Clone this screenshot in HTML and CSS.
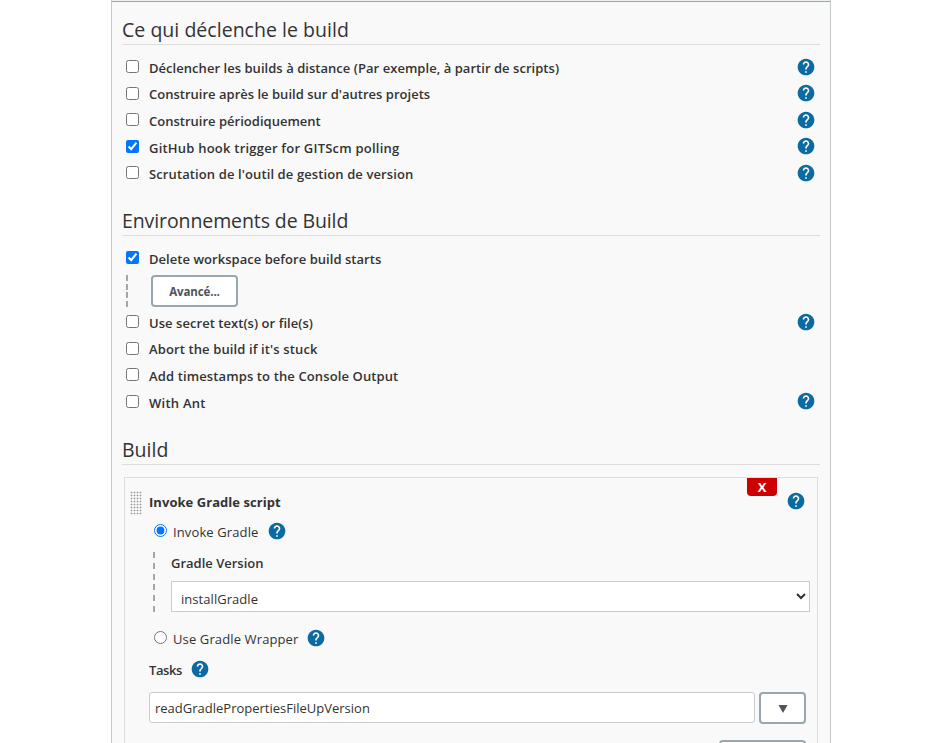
FILE: index.html
```html
<!DOCTYPE html>
<html lang="fr">
<head>
<meta charset="utf-8">
<title>Configuration</title>
<link rel="stylesheet" href="styles.css">
</head>
<body>
<svg width="0" height="0" class="defs"><symbol id="help" viewBox="0 0 24 24"><path fill="#0b6aa2" d="M12 2C6.48 2 2 6.48 2 12s4.48 10 10 10 10-4.480 10-10S17.520 2 12 2z"/><path fill="#fff" d="M11 17h2v2h-2zM15.070 11.250l-.9.920C13.450 12.900 13 13.500 13 15h-2v-.5c0-1.100.450-2.100 1.170-2.830l1.240-1.260c.370-.360.590-.860.590-1.410 0-1.100-.9-2-2-2s-2 .9-2 2H8c0-2.210 1.790-4 4-4s4 1.790 4 4c0 .880-.360 1.680-.930 2.250z"/></symbol></svg>
<main class="panel">
  <section>
    <h2 class="h-trigger"><span>Ce qui déclenche le build</span></h2>
    <div class="options">
      <div class="option"><label><input type="checkbox"><span class="t1">Déclencher les builds à distance (Par exemple, à partir de scripts)</span></label><svg class="help"><use href="#help"/></svg></div>
      <div class="option"><label><input type="checkbox"><span class="t2">Construire après le build sur d'autres projets</span></label><svg class="help"><use href="#help"/></svg></div>
      <div class="option"><label><input type="checkbox"><span class="t3">Construire périodiquement</span></label><svg class="help"><use href="#help"/></svg></div>
      <div class="option"><label><input type="checkbox" checked><span class="t4">GitHub hook trigger for GITScm polling</span></label><svg class="help"><use href="#help"/></svg></div>
      <div class="option"><label><input type="checkbox"><span class="t5">Scrutation de l'outil de gestion de version</span></label><svg class="help"><use href="#help"/></svg></div>
    </div>
  </section>
  <section>
    <h2 class="h-env"><span>Environnements de Build</span></h2>
    <div class="options">
      <div class="option"><label><input type="checkbox" checked><span class="t6">Delete workspace before build starts</span></label></div>
      <div class="nested"><i class="dash dash-short"></i><button class="advanced">Avancé...</button></div>
      <div class="option"><label><input type="checkbox"><span class="t7">Use secret text(s) or file(s)</span></label><svg class="help"><use href="#help"/></svg></div>
      <div class="option"><label><input type="checkbox"><span class="t8">Abort the build if it's stuck</span></label></div>
      <div class="option"><label><input type="checkbox"><span class="t9">Add timestamps to the Console Output</span></label></div>
      <div class="option"><label><input type="checkbox"><span class="t10">With Ant</span></label><svg class="help"><use href="#help"/></svg></div>
    </div>
  </section>
  <section>
    <h2 class="h-build"><span>Build</span></h2>
    <div class="step">
      <button class="delete">X</button>
      <div class="step-head"><i class="grip"></i><b>Invoke Gradle script</b><svg class="help"><use href="#help"/></svg></div>
      <div class="choice"><label><input type="radio" name="gradle" checked><span class="r1">Invoke Gradle</span></label><svg class="help"><use href="#help"/></svg></div>
      <div class="version">
        <i class="dash"></i>
        <div class="field"><span class="field-label">Gradle Version</span><select><option>installGradle</option></select></div>
      </div>
      <div class="choice wrapper"><label><input type="radio" name="gradle"><span class="r2">Use Gradle Wrapper</span></label><svg class="help"><use href="#help"/></svg></div>
      <div class="tasks-label"><span>Tasks</span><svg class="help"><use href="#help"/></svg></div>
      <div class="tasks"><input type="text" value="readGradlePropertiesFileUpVersion"><button class="expand"><svg width="10" height="8"><path d="M.5 0h9L5 8z"/></svg></button></div>
      <button class="more"></button>
    </div>
  </section>
</main>
</body>
</html>
```
FILE: styles.css
```css
* { box-sizing: border-box; }
body { margin: 0; background: #fff; color: #333; font-family: "Open Sans", "Noto Sans", sans-serif; font-size: 13px; height: 743px; overflow: hidden; }
.defs { position: absolute; }
input, button, select { margin: 0; font-family: inherit; color: inherit; }
button { padding: 0; }
.panel { width: 720px; height: 743px; margin-left: 111px; padding: 2px 10px 0; overflow: hidden; background: linear-gradient(#edf2f4 0 1px, #99a8ae 1px 2px, #f9f9f9 2px); border: 1px solid #c6c9cb; border-width: 0 1px; }
h2 { margin: 0; height: 43px; padding-top: 15px; border-bottom: 1px solid #dcdcdc; font-size: 19.5px; font-weight: 500; line-height: 25px; white-space: nowrap; }
.h-trigger { letter-spacing: .03px; }
.options { padding-top: 8.3px; }
.option { display: flex; align-items: center; justify-content: space-between; height: 26.6px; padding: 0 5px 0 4px; }
.option label { display: flex; align-items: center; height: 100%; }
.option label input { width: 13px; height: 13px; margin-right: 10px; }
.option span { font-weight: 600; line-height: 20px; padding-top: 2.4px; white-space: nowrap; }
.t1 { letter-spacing: .04px; }
.t2 { letter-spacing: .01px; }
.t3 { letter-spacing: .01px; }
.t4 { letter-spacing: .22px; }
.t5 { letter-spacing: .11px; }
.t6 { letter-spacing: .04px; }
.t7 { letter-spacing: .05px; }
.t8 { letter-spacing: .12px; }
.t9 { letter-spacing: .12px; }
.t10 { letter-spacing: .25px; }
.help { width: 20px; height: 20px; flex: none; }
.option .help { margin-right: -1px; }
.h-env { margin-top: 6.7px; letter-spacing: -.1px; }
.h-env + .options { padding-top: 8.7px; }
.nested { display: flex; height: 37px; padding: 3.4px 0 0 4px; }
.dash { width: 2px; flex: none; background: repeating-linear-gradient(#a6a6a6 0 6px, transparent 6px 10.8px); }
.dash-short { height: 32px; background: repeating-linear-gradient(#a6a6a6 0 6px, transparent 6px 8.700px); }
.advanced { width: 87px; height: 32px; margin-left: 23px; padding-top: 2px; border: 2px solid #98a6af; border-radius: 4px; background: #fff; font-size: 11.5px; font-weight: 700; color: #4d545d; letter-spacing: -.1px; }
.h-build { margin-top: 7.3px; }
.step { position: relative; width: 694px; height: 290px; margin: 12px 0 0 2px; padding: 0 7px 0 5px; border: 1px solid #ddd; }
.delete { position: absolute; top: 0; right: 40px; width: 30px; height: 18px; border: 0; border-radius: 0 0 4px 4px; background: #c00; color: #fff; font-size: 13px; font-weight: 700; line-height: 18px; }
.step-head { display: flex; align-items: center; height: 24px; margin-top: 12px; padding-right: 4px; }
.grip { width: 12px; height: 24px; margin-top: 3px; background: radial-gradient(circle at 1.500px 1.500px, #999 0 .6px, transparent 1.200px) 0 0 / 3px 3px; }
.step-head b { margin-left: 7px; flex: 1; letter-spacing: .05px; }
.step-head .help { margin-top: -1px; }
.choice { display: flex; align-items: center; height: 24px; margin: 5px 0 0 24px; }
.choice label { display: flex; align-items: center; }
.choice input { width: 13px; height: 13px; margin-right: 6px; }
.choice span { padding-top: 2px; white-space: nowrap; letter-spacing: .12px; }
.choice .help { margin-left: 8px; }
.version { display: flex; height: 60px; margin: 9px 0 0 23px; }
.field { flex: 1; margin-left: 16px; display: flex; flex-direction: column; }
.field-label { height: 29px; line-height: 22px; font-weight: 600; }
select { width: 639px; height: 31px; padding: 6px 1px 0 5px; border: 1px solid #ccc; border-radius: 0; background-color: #fff; font-size: 13px; letter-spacing: .05px; }
.wrapper { margin-top: 14px; }
.tasks-label { display: flex; align-items: center; height: 24px; margin: 7px 0 0 19px; font-weight: 600; }
.tasks-label span { letter-spacing: -.4px; padding-top: 2px; }
.tasks-label .help { margin-left: 8px; }
.tasks { display: flex; margin: 11px 0 0 19px; gap: 4px; }
.tasks input { width: 606px; height: 31px; padding: 1px 5px 0; border: 1px solid #ccc; border-radius: 3px; background: #fff; font-size: 13px; }
.expand { width: 47px; height: 32px; border: 2px solid #98a6af; border-radius: 4px; background: #fff; }
.expand path { fill: #4d545d; }
.more { display: block; width: 87px; height: 32px; margin: 16px 4px 0 auto; border: 2px solid #98a6af; border-radius: 4px; background: #fff; }
```
